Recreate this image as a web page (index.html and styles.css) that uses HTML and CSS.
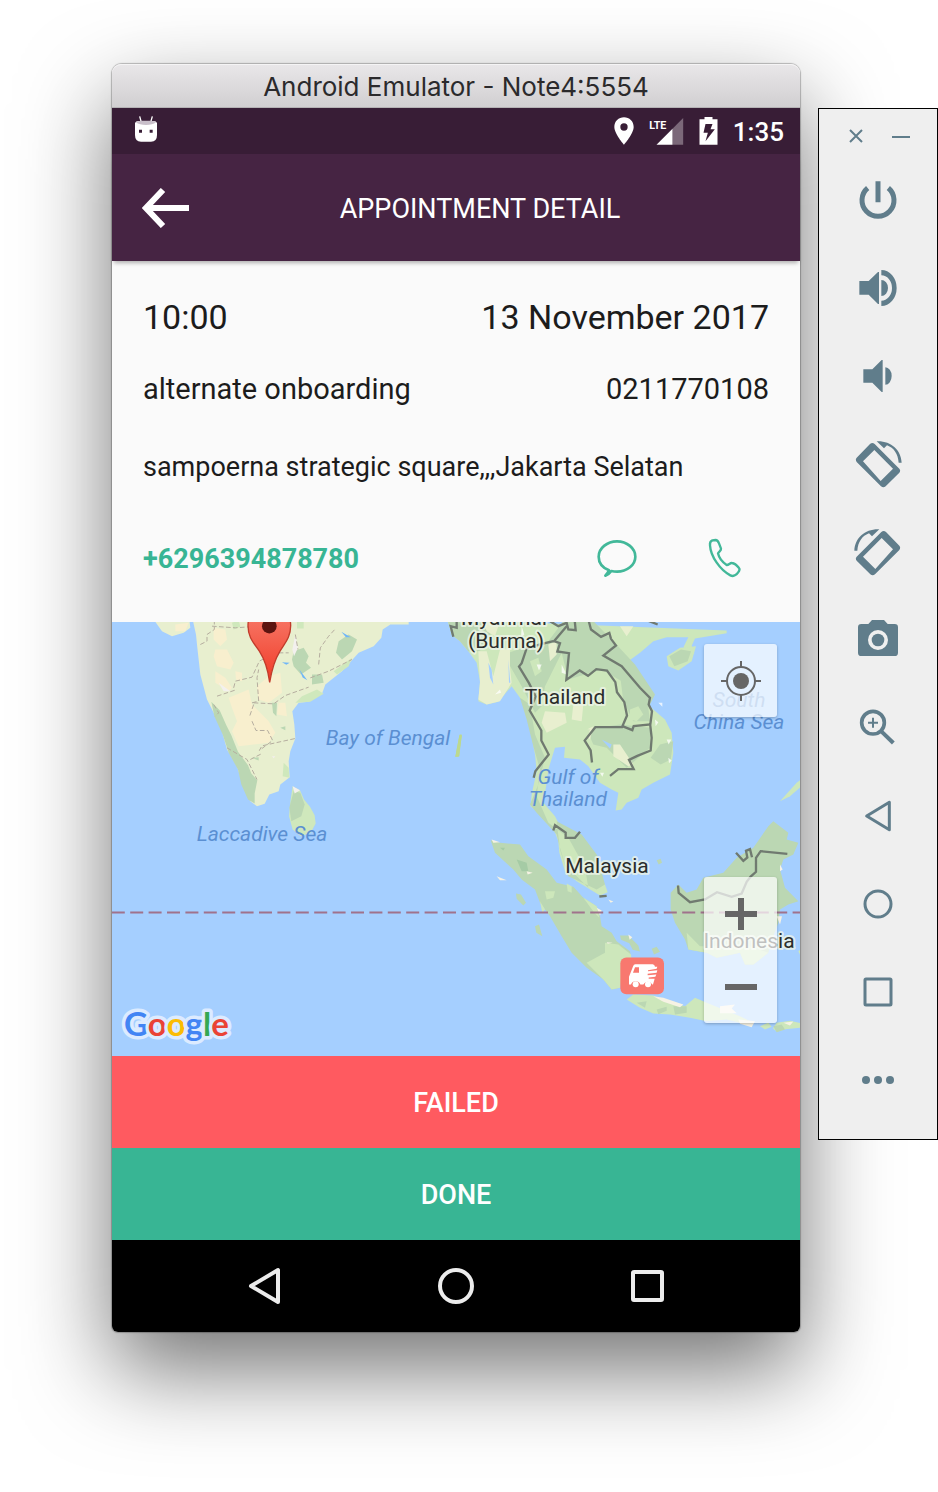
FILE: index.html
```html
<!DOCTYPE html>
<html lang="en">
<head>
<meta charset="utf-8">
<meta name="viewport" content="width=device-width, initial-scale=1">
<title>Android Emulator - Note4:5554</title>
<link rel="stylesheet" href="styles.css">
</head>
<body>
<div class="desktop">
  <main class="window">
    <div class="titlebar">Android Emulator - Note4:5554</div>

    <div class="statusbar">
      <svg class="status-robot" viewBox="0 0 72 84" aria-hidden="true"><path d="M17 4l5 18M55 4l-5 18" stroke="#fff" stroke-width="4"/><path d="M3 24Q5 18 14 18h44q9 0 11 6v36q0 20-18 20H21Q3 80 3 60z" fill="#fff"/><path d="M6 22q6-5 15-5h30q9 0 15 5-10 8-30 8T6 22z" fill="#c9bfca"/><path d="M15 44h9v9h-9zM47 44h9v9h-9z" fill="#381d36"/></svg>
      <div class="status-right">
        <svg class="status-pin" viewBox="0 0 60 84" aria-hidden="true"><path fill="#fff" fill-rule="evenodd" d="M30 1C14 1 1 13 1 30c0 20 29 53 29 53s29-33 29-53C59 13 46 1 30 1zm0 18a11 11 0 1 1 0 22 11 11 0 0 1 0-22z"/></svg>
        <svg class="status-signal" viewBox="0 0 104 84" aria-hidden="true"><path d="M102 3v80H70V35z" fill="#7b6879"/><path d="M70 35v48H22z" fill="#fff"/><text x="0" y="36" class="lte">LTE</text></svg>
        <svg class="status-battery" viewBox="0 0 56 84" aria-hidden="true"><path fill="#fff" d="M16 0h24v7h15v76H1V7h15z"/><path fill="#381d36" d="M19 21h21l-6 16h13L19 73l7-26H13z"/></svg>
        <span class="clock">1:35</span>
      </div>
    </div>

    <header class="appbar">
      <button class="plain back" aria-label="Back"><svg viewBox="0 0 48 40" aria-hidden="true"><path d="M21 2 4 20l17 18M4 20h43" fill="none" stroke="#fff" stroke-width="6"/></svg></button>
      <h1>APPOINTMENT DETAIL</h1>
    </header>

    <section class="details">
      <div class="row row-time"><span>10:00</span><span>13 November 2017</span></div>
      <div class="row row-name"><span>alternate onboarding</span><span>0211770108</span></div>
      <div class="row row-address">sampoerna strategic square,,,Jakarta Selatan</div>
      <div class="row row-phone">
        <a href="tel:+6296394878780">+6296394878780</a>
        <div class="contact">
          <button class="plain contact-btn" aria-label="Message"><svg viewBox="0 0 144 144" aria-hidden="true"><path d="M48 109C29 101 17 86 17 68c0-25 25-46 55-46s55 21 55 46-25 45-55 45q-9 0-17-2-7 10-18 14 8-8 11-16z" fill="none" stroke="#42b899" stroke-width="8" stroke-linejoin="round"/></svg></button>
          <button class="plain contact-btn" aria-label="Call"><svg viewBox="0 0 144 144" aria-hidden="true"><path d="M27 34c-1-8 2-13 7-15l10-1c5 0 8 5 10 10l6 16c1 6-7 9-9 14 3 14 14 27 26 35 6 1 10-7 16-6 8 1 17 10 21 15 4 4 0 10-3 14-7 9-15 12-23 8C57 108 29 67 27 34z" fill="none" stroke="#42b899" stroke-width="7" stroke-linejoin="round"/></svg></button>
        </div>
      </div>
    </section>

    <section class="map" aria-label="Map">
      <svg class="map-art" viewBox="0 0 688 435" preserveAspectRatio="xMidYMid slice">
        <rect x="-400" width="1500" height="435" fill="#a5cfff"/>
        <!-- India and Sri Lanka -->
        <g transform="translate(0 -7) scale(.333333)">
          <path fill="#e8efcf" d="M125 15l25 35 30 15 35-10 20-15-3-25zM242 15l10 45 4 40 9 80 20 75 20 40 25 55 15 55 30 50 20 65 20 40 20 15 23-7 14-28 28-10 5-20 28-22-3-48 5-30 15-38-3-42-6-40 19-25 30-3 40-24 10-28 50-40 50-55 45-20 23-25 4-25 23-15 55 0v-15z"/>
          <path fill="#f8efce" d="M305 40l35 5 5 30-20 20-20-20zM310 105l35 0 20 40-10 20-40-10-10-30zM310 170l30 20 20 30-10 10-40-25zM190 30l40-5-10 25-30 0zM470 185l35-10 5 60-40 30-30-10-5-40zM350 250l60-25 10 45 50 50 20 35-20 30-90 10-20-45 15-30-15-40zM500 265l20 0 5 40-30-5zM370 170l20 5 0 25-18-5z"/>
          <path fill="#bbd7b3" d="M298 262l25 25 20 45 15 30 20 50 30 40 10 25 18 20-8 40 0 30-20-12-20-45-10-45-28-50-18-55-25-55zM545 110l30-10 15 25-8 20 15 15-30 20-22-25-5-20zM680 80l30-20 25 15-15 35-30 25-18-20zM600 180l30 0 5 25-35 5zM480 265l15 0-2 40-10-10zM505 340l15-5v12zM420 430l20-2v10z"/>
          <path fill="#cfe8bc" d="M550 265l20-20 45-20 20 13-40 24zM515 445l15 15 2 30-20-5zM665 170l55-40-10 25-35 25zM360 25l20-8 5 20-20 8zM555 17l20 5 0 20-20 0z"/>
          <path fill="#6fb6f8" d="M688 52l28 16-14 0zM510 143l23 2-10 6zM562 165l24 32-14-8z"/>
          <path fill="#cfe8bc" d="M542 515l22 12 12 28 18 22 14 25 3 25-15 28-30 10-24-20-11-40 5-50z"/>
          <path fill="#bbd7b3" d="M545 530l20 5 13 35-10 35-30 15-6-40z"/><path fill="#f3f0ee" d="M542 515l22 12-16 10zM480 425l10 0-5 6zM550 60l8 40-12 25-5-20zM320 205l35 25-20 0z"/>
          <path fill="none" stroke="#b5ad9f" stroke-width="3" stroke-dasharray="14 7" d="M265 90l20-10 0-20 22-15 0-25M300 35l70 5 55-4M365 220l5-20 50-12 22-48 22-12M315 245l60-20M420 265l20-5-5-70 5-25M425 265l60 3 35-25 70-25M425 270l-12 35M420 320l12 28 35 0 15 30-40 30 8-14 45-10 55-12M415 435l35-18M345 400l60 35 30 60M500 115l30 0M550 60l8 45M620 150l5-50 25-35 20-22M595 190l55-20 70-35M305 270l15 25-10 10"/>
          <path fill="#bcd98e" d="M1043 360l6 0-7 65-12 2z"/>
          <path d="M408 34C407-50 537-50 536 34c0 35-18 52-32 76-18 29-25 57-31 94-5-37-12-65-31-94-16-24-34-41-34-76z" fill="url(#pin)" stroke="#c13b2b" stroke-width="4"/><circle cx="472" cy="35" r="22" fill="#5c1410"/>
        </g>
        <defs><linearGradient id="pin" x1="0" y1="0" x2="0" y2="1"><stop stop-color="#f88070"/><stop offset="1" stop-color="#f03a26"/></linearGradient></defs>
        <!-- Mainland South-East Asia -->
        <g transform="translate(328 -7) scale(.333333)">
          <path fill="#cde7bb" d="M22 15l13 45 25 20 25 30 25 35 10 55-5 60 25 10 35-8 40-47 25 35 22 40 10 60 13 70 5 50-15 70-3 35 28 25 40 40 15 40 3 35 17 55 35 30 70 43 23-10-8-23-25-35-3-50-42-60-65-30-15-30-35-40 10-60 5-40 20-65 30-3-3 33 48 5 25 20 35 50 35 20 20 10-8 53 18-3 15-20 35-15 10-25 35-20 50-25 10-65-5-60-20-40-35-30-25-25-55-75 5-45 35-25 40-35 40-12 65 0-14 29 14 24 18-4-8-23 10-22 95-16v-8z"/>
          <path fill="#bbd7b3" d="M22 15l13 45 25 20 25 30 30 0 40-20-10-75zM190 120l60-20 75-20 45-60 90 0 60 60 65 70 60 90-20 40-50-20-30-60-60-35-100 30-20-80-50 100-10 60-20 20-40-80zM240 250l30 20 15 90 30 70-20 80-25 60 20 25 60 65 10 40 15 50 70 70-10-60-50-90-60-45-35-80 10-80-20-70-20-80zM350 620l75 40 45 60 25 90-25 15-85-40-25-80zM540 330l90 10 0 60-70 60-60-60-40-10-20-45zM660 390l40-10-8 55-30 15-30-20zM540 180l80 60 10 80-50 0-30-60z"/>
          <path fill="#e8efcf" d="M115 110l25 0 20 75 20-80 30-5 0 60 5 45-35 55-40 10-25-15 5-50zM400 270l30 0-5 50-30-5zM325 90l25-10 0 40-20 20zM315 290l60 5 5 30-60 30-15-30zM520 390l20 0 40 60-15 5-45-30zM540 35l40 0-20 30zM130 20l50 0-15 45-25-15zM430 350l30-15-10 40z"/>
          <path fill="#cde7bb" d="M570 285l25-10 15 25-20 20-20-5zM270 140l25-10 10 40-20 15zM400 340l50 5-15 50zM680 125l40-25 48-5-13 45-40 28-30-13z"/>
          <path fill="#bbd7b3" d="M688 125l35-20 30 5-10 30-40 15z"/>
          <path fill="#fff" opacity=".75" d="M245 35l8 25-10 10zM290 150l15 0-8 18zM365 150l15 30-15-5zM645 315l10 8-8 12zM680 375l14 0-8 15zM655 265l12 0 0 12zM685 430l10 8-8 8zM480 475l12 0-5 12zM180 225l-15 15 18-5z"/>
          <path fill="#a5cfff" d="M145 145l10 20 5 45-10-20zM485 375l30 15-5 12zM205 135l6 70-4 0z"/>
          <path fill="#cde7bb" d="M1020 560l50-55 20-15 0 20-40 35z"/>
          <path fill="#bcd98e" d="M58 362l8 0-10 65-10 0z"/>
          <g fill="none" stroke="#707a70" stroke-width="7">
            <path d="M50 15l0 25-18-5 8 32M330 20l25 15 25-10 5 20 22 2-3-30M380 35l-38 45 18 6-8 25 35 5-8 80 40-28 25 16 25-20 32 4 25 35 5 30 22 30 8 40-15 35-80 0-32 40 18 30 4 36M445 15l8 30 30 22 25-12 5 18 15 20-38 30 55 32 55 65 30 30-4 20 10 20-5 40-50 5-4 12-30-12M630 325l5 45-3 38-40 16-25 12 14 28-46 0-25 20M340 80l-25 6-55 15-15 45-8 10 30 50 20 40-18 42 35 60 0 30 22 42-40 50-5 20M615 15l38 15M340 648l5-16 32 22 0 16 28 0 15-18M478 846l22-2"/>
          </g>
        </g>
        <!-- Indonesia and Borneo -->
        <g transform="translate(328 188) scale(.333333)">
          <path fill="#bbd7b3" d="M152 92l28 8 60 5 25 35 55 40 30 40 50 12 30 33 40 25 10 30 5 30 30 20 15 25 40 30 5 35-30 40-5 35-25 5-25-30-50-35-45-45-30-50-35-60-30-40-15-40-40-30-25-30-55-50zM692 250l23-25 25 25 30-10 20-35 60-15 40-45 50-30 45-65 15-15 45 35-5 20 35 10-15 35-30 15-10 30 15 55 40 40-30 10-25 15-5 40-15 40-15 50-45 35-25 0-15-35-70 15-30-15-55-10-10-30-30-50-13-40zM228 252l15 3 15 25-8 8-20-20zM540 378l25 0 30 30 5 18-22-5-10-20-25-10zM635 418l15-6 10 15-18 8zM650 152l12-4 4 12-10 5zM285 350l12-5 10 35-18-10z"/>
          <path fill="#cde7bb" d="M440 460l55-30 0-30 40 5 38 30 2 25-30 40-5 35-25 5-25-30zM315 245l30 0-5 20-20 5zM380 222l15 8 0 20-12-5zM430 265l40 25 8 35-15-15zM740 370l40 40 50 0 100 0 55 20-45 35-25 0-15-35-70 15-30-15-55-10zM300 275l15 25-8 10zM560 570l20-15 60 3 40 17 55 15 30-25 35 15 50 20 50 20 40 20-40 0-40-10-60 5-50-10-60-10-50-3-40-17zM960 650l25-10 10 12-20 8zM1010 640l40-6 36 8 0 12-50 5-25 8-12-10zM1075 425l11-8 0 30z"/>
          <path fill="#bbd7b3" d="M590 580l30-5-5 20zM650 600l30-8 0 12-25 10zM700 590l40 0 0 20-35 5zM1000 650l25-5 10 15-25 8z"/>
          <path fill="#a5cba5" d="M230 150l30 10 5 25-20 0zM180 115l15 0-5 8z"/>
          <path fill="#f6f2e4" d="M640 560l30 5 60 20-10 8-50-16zM170 200l30 12-20 0zM260 185l18 5-15 5zM470 295l15 8-5 15zM500 398l18 2-15 3zM840 590l45-5-10 12 15 14-50 0zM895 630l50 5-10 18-35-10zM1030 640l30-4-10 12zM1020 165l8 15-8 5zM1010 320l16 0-6 25zM565 375l12 8-8 8zM505 270l15 6-8 4zM180 98l-25-8 5 10z"/>
          <g fill="none" stroke="#707a70" stroke-width="7"><path d="M714 228l2 22 34 28 45-8 36-22 44 14 30-10 15-35 12-16 16-14 0-42 14-20 80 8M888 130l22 24 12-10-4-20 12-5 6 24"/></g>
        </g>
        <path class="equator" d="M-400 291h1500"/>
        <g class="sea"><text x="276" y="123">Bay of Bengal</text><text x="150" y="219">Laccadive Sea</text><text x="456" y="162">Gulf of</text><text x="456" y="184">Thailand</text><text x="627" y="85">South</text><text x="627" y="107">China Sea</text></g>
        <g class="place"><text x="393" y="3">Myanmar</text><text x="394" y="26">(Burma)</text><text x="453" y="82">Thailand</text><text x="495" y="251">Malaysia</text><text x="637" y="326">Indonesia</text></g>
        <g transform="translate(328 188) scale(.333333)">
          <rect x="541" y="444" width="131" height="110" rx="18" fill="#f8786f"/>
          <path fill="#fff" d="M586 464h52q6 0 7 8h7l-2 6-26 4v3l28-3-2 8-27 3v4l26-2-3 7-20 2v4h18l-5 17h-2a15 15 0 0 0-27 0h-9a15 15 0 0 0-28 0h-6V502l12-31q2-7 7-7z"/><path fill="#f8786f" d="M585 473h12v17h-18z"/><circle cx="587" cy="524" r="9" fill="#fff"/><circle cx="624" cy="524" r="9" fill="#fff"/>
        </g>
      </svg>
      <svg class="google" viewBox="0 0 116 44" role="img" aria-label="Google"><text x="4" y="28"><tspan fill="#4285f4">G</tspan><tspan fill="#ea4335">o</tspan><tspan fill="#fbbc05">o</tspan><tspan fill="#4285f4">g</tspan><tspan fill="#34a853">l</tspan><tspan fill="#ea4335">e</tspan></text></svg>
      <button class="plain map-control locate" aria-label="My location"><svg viewBox="0 0 42 42" aria-hidden="true"><circle cx="21" cy="21" r="14" fill="none" stroke="#666" stroke-width="2"/><circle cx="21" cy="21" r="8" fill="#666"/><path d="M21 1v7M21 34v7M1 21h7M34 21h7" stroke="#666" stroke-width="2"/></svg></button>
      <div class="map-control zoom">
        <button class="plain" aria-label="Zoom in"><svg viewBox="0 0 34 34" aria-hidden="true"><path d="M17 1v32M1 17h32" stroke="#666" stroke-width="6"/></svg></button>
        <button class="plain" aria-label="Zoom out"><svg viewBox="0 0 34 34" aria-hidden="true"><path d="M1 17h32" stroke="#666" stroke-width="6"/></svg></button>
      </div>
    </section>

    <button class="plain action failed">FAILED</button>
    <button class="plain action done">DONE</button>

    <nav class="navbar">
      <button class="plain" aria-label="Back"><svg viewBox="0 0 40 40" aria-hidden="true"><path d="M6 20 33 4v32z"/></svg></button>
      <button class="plain" aria-label="Home"><svg viewBox="0 0 40 40" aria-hidden="true"><circle cx="20" cy="20" r="16"/></svg></button>
      <button class="plain" aria-label="Overview"><svg viewBox="0 0 40 40" aria-hidden="true"><rect x="6" y="6" width="29" height="28" rx="1"/></svg></button>
    </nav>
  </main>

  <aside class="toolbar">
    <div class="toolbar-head">
      <button class="plain" aria-label="Close"><svg viewBox="0 0 18 18" aria-hidden="true"><path d="M3 3l12 12M15 3 3 15" stroke="#607d8b" stroke-width="2"/></svg></button>
      <button class="plain" aria-label="Minimize"><svg viewBox="0 0 18 18" aria-hidden="true"><path d="M0 10h18" stroke="#607d8b" stroke-width="2"/></svg></button>
    </div>
    <button class="plain tool" aria-label="Power"><svg viewBox="0 0 144 144" aria-hidden="true"><path class="line" stroke-width="15" d="M41 36a48 48 0 1 0 62 0M72 16v63"/></svg></button>
    <button class="plain tool" aria-label="Volume up"><svg viewBox="0 0 144 144" aria-hidden="true"><path d="M16 51h28l28-27h3v96h-3L44 92H16zM82 48a20 24 0 0 1 0 48zM82 18a46 54 0 0 1 0 108v-16a32 38 0 0 0 0-76z"/></svg></button>
    <button class="plain tool" aria-label="Volume down"><svg viewBox="0 0 144 144" aria-hidden="true"><path d="M28 52h27l28-28h3v96h-3L55 92H28zM94 46a19 26 0 0 1 0 52z"/></svg></button>
    <button class="plain tool" aria-label="Rotate left"><svg viewBox="0 0 144 144" aria-hidden="true"><path fill-rule="evenodd" d="M8 53 48 12q7-6 14 0l74 74q5 6 0 12l-41 41q-7 6-14 0L8 66q-5-7 0-13zM61 30 27 64l53 59 37-37z"/><path d="M68 4c42-2 73 25 75 64h-9c-2-26-14-44-35-52l-9 9z"/></svg></button>
    <button class="plain tool" aria-label="Rotate right"><svg viewBox="0 0 144 144" aria-hidden="true"><g transform="translate(144 0) scale(-1 1)"><path fill-rule="evenodd" d="M8 53 48 12q7-6 14 0l74 74q5 6 0 12l-41 41q-7 6-14 0L8 66q-5-7 0-13zM61 30 27 64l53 59 37-37z"/><path d="M68 4c42-2 73 25 75 64h-9c-2-26-14-44-35-52l-9 9z"/></g></svg></button>
    <button class="plain tool" aria-label="Take screenshot"><svg viewBox="0 0 144 144" aria-hidden="true"><path fill-rule="evenodd" d="M54 12h36l11 12h21q10 0 10 10v76q0 10-10 10H22q-10 0-10-10V34q0-10 10-10h21zM72 42a30 30 0 1 0 0 60 30 30 0 0 0 0-60z"/><circle cx="72" cy="72" r="19"/></svg></button>
    <button class="plain tool" aria-label="Zoom"><svg viewBox="0 0 144 144" aria-hidden="true"><circle class="line" cx="57" cy="56" r="34" stroke-width="11"/><path class="line" stroke-width="12" d="m82 82 36 35"/><path class="line" stroke-width="6" d="M42 56h30M57 41v30"/></svg></button>
    <button class="plain tool" aria-label="Back"><svg viewBox="0 0 144 144" aria-hidden="true"><path class="line" stroke-width="9" stroke-linejoin="round" d="m38 72 68-41v82z"/></svg></button>
    <button class="plain tool" aria-label="Home"><svg viewBox="0 0 144 144" aria-hidden="true"><circle class="line" cx="72" cy="72" r="39" stroke-width="9"/></svg></button>
    <button class="plain tool" aria-label="Overview"><svg viewBox="0 0 144 144" aria-hidden="true"><rect class="line" x="33" y="33" width="78" height="78" rx="3" stroke-width="9"/></svg></button>
    <button class="plain tool" aria-label="More"><svg viewBox="0 0 144 144" aria-hidden="true"><circle cx="36" cy="72" r="12"/><circle cx="72" cy="72" r="12"/><circle cx="108" cy="72" r="12"/></svg></button>
  </aside>
</div>
</body>
</html>
```

FILE: styles.css
```css
* { box-sizing: border-box; }
body { margin: 0; background: #fff; font-family: Roboto, "Liberation Sans", sans-serif; color: #1c1c1c; }
svg { display: block; }
.plain { display: flex; align-items: center; justify-content: center; margin: 0; padding: 0; border: 0; background: none; color: inherit; font: inherit; cursor: pointer; }

.desktop { display: flex; align-items: flex-start; gap: 18px; padding: 64px 0 160px 112px; overflow: hidden; }
.window { flex: 1; min-width: 0; border-radius: 10px 10px 6px 6px; box-shadow: 0 0 1px 1px rgba(0,0,0,.25), 0 38px 90px rgba(0,0,0,.55); }
.titlebar { height: 44px; border-radius: 9px 9px 0 0; border-bottom: 1px solid #b4b2b4; background: linear-gradient(#e9e7e9, #d1cfd1); box-shadow: inset 0 1px #f5f4f5; font: 26px/46px Inter, sans-serif; text-align: center; color: #2b2a2c; }

.statusbar { display: flex; align-items: center; justify-content: space-between; height: 46px; padding: 0 16px 0 22px; background: #381d36; color: #fff; }
.status-robot { width: 24px; height: 28px; margin-bottom: 4px; }
.status-right { display: flex; align-items: center; gap: 15px; }
.status-pin { width: 20px; height: 28px; }
.status-signal { width: 35px; height: 28px; }
.lte { font: 700 32px Roboto, sans-serif; fill: #fff; }
.status-battery { width: 19px; height: 28px; }
.clock { font-size: 26px; font-weight: 500; line-height: 28px; padding-top: 2px; }

.appbar { position: relative; z-index: 1; display: grid; grid-template-columns: 48px 1fr; align-items: center; height: 107px; padding: 0 30px; background: #462443; color: #fff; box-shadow: 0 4px 4px -2px rgba(0,0,0,.3); }
.back { width: 48px; height: 48px; }
.back svg { width: 48px; height: 40px; }
.appbar h1 { margin: 0; padding-top: 2px; font-size: 27px; font-weight: 400; text-align: center; line-height: 36px; }

.details { padding: 20px 31px 15px; background: #fafafa; }
.row { display: flex; align-items: center; justify-content: space-between; height: 72px; }
.row-time { font-size: 34px; }
.row-name { font-size: 29px; }
.row-address { height: 84px; font-size: 27px; }
.row-phone { height: 98px; font-size: 27px; font-weight: 700; }
.row-phone a { padding-top: 2px; color: #38b594; text-decoration: none; }
.contact { display: flex; gap: 60px; padding-right: 20px; }
.contact-btn, .contact-btn svg { width: 48px; height: 48px; }

.map { position: relative; height: 434px; overflow: hidden; background: #a5cfff; }
.map-art { width: 100%; height: 100%; }
.map-art text { text-anchor: middle; }
.equator { stroke: #a0728c; stroke-width: 2; stroke-dasharray: 13 5.4; stroke-dashoffset: 5; }
.sea { font-size: 21px; font-style: italic; fill: #5b8fd2; }
.place { font-size: 21px; fill: #2b2d2b; stroke: #edf5e8; stroke-width: 4px; stroke-opacity: .8; stroke-linejoin: round; paint-order: stroke; }
.google { position: absolute; left: 8px; bottom: 4px; width: 116px; height: 44px; overflow: visible; }
.google text { font: 700 33px Lato, sans-serif; stroke: #dcebff; stroke-width: 7px; stroke-linejoin: round; paint-order: stroke; }
.map-control { position: absolute; right: 23px; width: 73px; border-radius: 3px; background: rgba(255,255,255,.7); box-shadow: 0 1px 3px rgba(0,0,0,.25); }
.locate { top: 22px; height: 73px; }
.locate svg { width: 42px; height: 42px; }
.zoom { bottom: 33px; }
.zoom button { width: 73px; height: 73px; }
.zoom svg { width: 34px; height: 34px; }

.action { width: 100%; height: 92px; padding-top: 2px; color: #fff; font-size: 27px; font-weight: 500; }
.failed { background: #ff5a60; }
.done { background: #38b594; }

.navbar { display: flex; justify-content: center; height: 92px; border-radius: 0 0 6px 6px; background: #000; }
.navbar button { width: 191px; }
.navbar svg { width: 40px; height: 40px; fill: none; stroke: #ececec; stroke-width: 4px; stroke-linejoin: round; }

.toolbar { position: relative; flex: none; width: 120px; margin-top: 44px; padding-bottom: 15px; border: 1px solid #000; background: #efefef; }
.toolbar-head { display: flex; align-items: center; justify-content: center; gap: 27px; height: 47px; padding-top: 7px; }
.toolbar-head svg { width: 18px; height: 18px; }
.tool { width: 100%; height: 88px; }
.tool svg { width: 48px; height: 48px; fill: #607d8b; }
.tool .line { fill: none; stroke: #607d8b; }
```
